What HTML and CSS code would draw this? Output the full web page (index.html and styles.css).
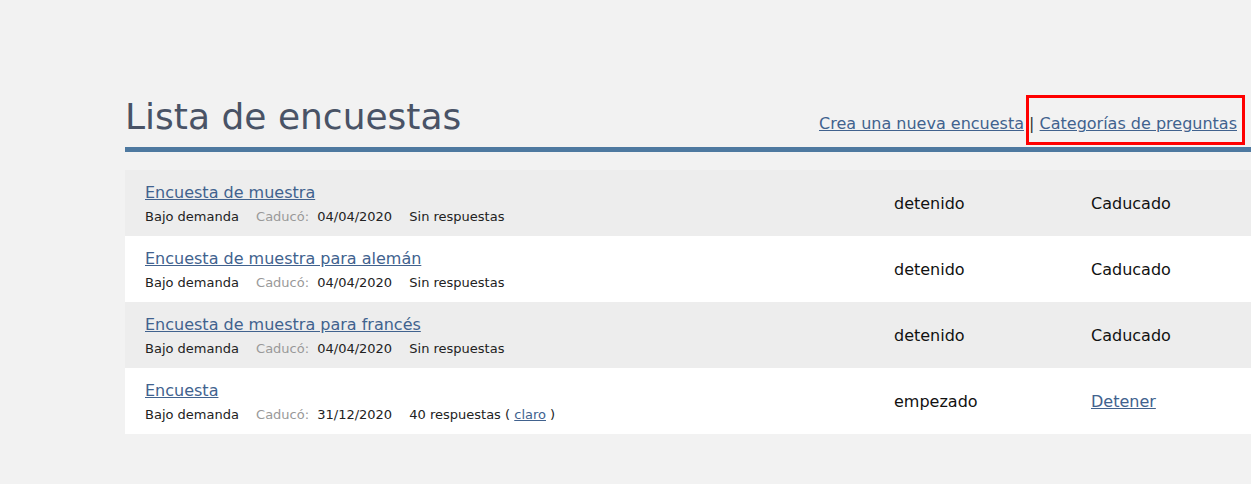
FILE: index.html
```html
<!DOCTYPE html>
<html lang="es">
	<head>
		<meta charset="UTF-8">
		<title>Lista de encuestas</title>
		<link rel="stylesheet" href="styles.css">
	</head>
	<body>
		<div class="page">
			<div class="header">
				<h1 class="title">Lista de encuestas</h1>
				<div class="nav">
					<a href="#">Crea una nueva encuesta</a>
					<span class="sep">|</span>
					<a href="#">Categorías de preguntas</a>
				</div>
				<div class="callout"></div>
			</div>

			<div class="list">
				<div class="row odd">
					<div class="name">
						<a href="#" class="survey">Encuesta de muestra</a>
						<div class="meta">
							<span class="item">Bajo demanda</span>
							<span class="item"><span class="label">Caducó:</span> 04/04/2020</span>
							<span class="item">Sin respuestas</span>
						</div>
					</div>
					<div class="status">detenido</div>
					<div class="action">Caducado</div>
				</div>
				<div class="row">
					<div class="name">
						<a href="#" class="survey">Encuesta de muestra para alemán</a>
						<div class="meta">
							<span class="item">Bajo demanda</span>
							<span class="item"><span class="label">Caducó:</span> 04/04/2020</span>
							<span class="item">Sin respuestas</span>
						</div>
					</div>
					<div class="status">detenido</div>
					<div class="action">Caducado</div>
				</div>
				<div class="row odd">
					<div class="name">
						<a href="#" class="survey">Encuesta de muestra para francés</a>
						<div class="meta">
							<span class="item">Bajo demanda</span>
							<span class="item"><span class="label">Caducó:</span> 04/04/2020</span>
							<span class="item">Sin respuestas</span>
						</div>
					</div>
					<div class="status">detenido</div>
					<div class="action">Caducado</div>
				</div>
				<div class="row">
					<div class="name">
						<a href="#" class="survey">Encuesta</a>
						<div class="meta">
							<span class="item">Bajo demanda</span>
							<span class="item"><span class="label">Caducó:</span> 31/12/2020</span>
							<span class="item">40 respuestas ( <a href="#">claro</a> )</span>
						</div>
					</div>
					<div class="status">empezado</div>
					<div class="action"><a href="#">Detener</a></div>
				</div>
			</div>
		</div>
	</body>
</html>
```

FILE: styles.css
```css
body {
	margin: 0;
	background-color: #f2f2f2;
	font-family: "DejaVu Sans", Verdana, sans-serif;
	color: #111111;
}

a {
	color: #41628e;
	text-decoration: underline;
}

.page {
	padding: 96px 0 0 125px;
}

.header {
	position: relative;
	display: flex;
	justify-content: space-between;
	align-items: baseline;
	padding-bottom: 9px;
	border-bottom: 5px solid #4e79a0;
}

.title {
	margin: 0;
	font-size: 36px;
	line-height: 42px;
	font-weight: normal;
	color: #495366;
}

.nav {
	font-size: 16px;
	padding-right: 14px;
}

.nav .sep {
	color: #333333;
}

.callout {
	position: absolute;
	top: -1px;
	right: 6px;
	width: 219px;
	height: 50px;
	box-sizing: border-box;
	border: 3px solid #ff0000;
}

.list {
	margin-top: 18px;
}

.row {
	display: grid;
	grid-template-columns: 749px 197px 1fr;
	align-items: center;
	height: 66px;
	box-sizing: border-box;
	padding-left: 20px;
	background-color: #ffffff;
	font-size: 16px;
}

.row.odd {
	background-color: #ededed;
}

.name {
	align-self: start;
	padding-top: 13px;
}

.survey {
	display: inline-block;
	font-size: 16px;
	line-height: 19px;
}

.meta {
	margin-top: 7px;
	font-size: 13px;
	line-height: 16px;
	color: #222222;
}

.meta .item {
	margin-right: 13px;
}

.meta .label {
	color: #999999;
	margin-right: 4px;
}
```
